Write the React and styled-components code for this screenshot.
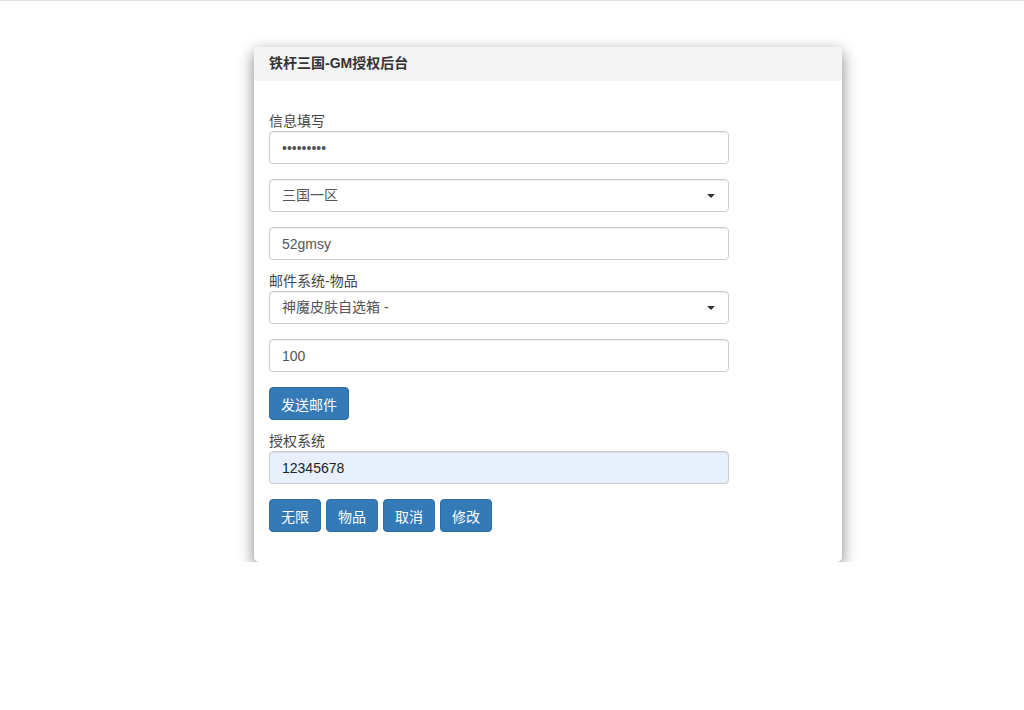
import React from 'react';
import styled, { createGlobalStyle } from 'styled-components';

const GlobalStyle = createGlobalStyle`
  html, body {
    margin: 0;
    padding: 0;
    background: #fff;
  }
  body {
    font-family: "Liberation Sans", Arial, "Noto Sans CJK SC", sans-serif;
    font-size: 14px;
    line-height: 1.42857;
    color: #333;
  }
  * {
    box-sizing: border-box;
  }
`;

const App = () => {
  return (
    <>
      <GlobalStyle />
      <TopLine />
      <Page>
        <Panel>
          <PanelHeading>铁杆三国-GM授权后台</PanelHeading>
          <PanelBody>
            <Label>信息填写</Label>
            <Group>
              <Input type="password" defaultValue="123456789" />
            </Group>
            <Group>
              <Select>
                <span>三国一区</span>
                <Caret />
              </Select>
            </Group>
            <Group>
              <Input type="text" defaultValue="52gmsy" />
            </Group>
            <Label>邮件系统-物品</Label>
            <Group>
              <Select>
                <span>神魔皮肤自选箱 -</span>
                <Caret />
              </Select>
            </Group>
            <Group>
              <Input type="text" defaultValue="100" />
            </Group>
            <Group>
              <Button>发送邮件</Button>
            </Group>
            <Label>授权系统</Label>
            <Group>
              <Input type="text" defaultValue="12345678" $filled />
            </Group>
            <ButtonRow>
              <Button>无限</Button>
              <Button>物品</Button>
              <Button>取消</Button>
              <Button>修改</Button>
            </ButtonRow>
          </PanelBody>
        </Panel>
      </Page>
    </>
  );
};

export default App;

const TopLine = styled.div`
  height: 1px;
  background: #e3e3e3;
`;

const Page = styled.div`
  padding: 46px 0 0 254px;
`;

const Panel = styled.div`
  width: 588px;
  background: #fff;
  border-radius: 5px;
  box-shadow: 0 5px 15px rgba(0, 0, 0, 0.5);
  overflow: hidden;
`;

const PanelHeading = styled.div`
  height: 34px;
  padding: 0 15px;
  display: flex;
  align-items: center;
  background: #f5f5f5;
  color: #333;
  font-weight: bold;
  font-size: 14px;
`;

const PanelBody = styled.div`
  padding: 30px 15px 15px;
`;

const Label = styled.div`
  height: 20px;
  line-height: 20px;
  margin-top: -4px;
  color: #444;
  font-size: 14px;
  &:first-child {
    margin-top: 0;
  }
`;

const Group = styled.div`
  margin-bottom: 15px;
`;

const Input = styled.input`
  display: block;
  width: 460px;
  height: 33px;
  padding: 6px 12px;
  font-family: inherit;
  font-size: 14px;
  color: ${(p) => (p.$filled ? '#222' : '#555')};
  background: ${(p) => (p.$filled ? '#e8f0fe' : '#fff')};
  border: 1px solid #ccc;
  border-radius: 4px;
  box-shadow: inset 0 1px 1px rgba(0, 0, 0, 0.075);
  outline: none;
`;

const Select = styled.div`
  width: 460px;
  height: 33px;
  padding: 0 12px;
  display: flex;
  align-items: center;
  justify-content: space-between;
  font-size: 14px;
  color: #555;
  background: #fff;
  border: 1px solid #ccc;
  border-radius: 4px;
  box-shadow: inset 0 1px 1px rgba(0, 0, 0, 0.075);
`;

const Caret = styled.i`
  width: 0;
  height: 0;
  margin-right: 1px;
  border-left: 4px solid transparent;
  border-right: 4px solid transparent;
  border-top: 4px solid #333;
`;

const ButtonRow = styled.div`
  display: flex;
  gap: 5px;
  margin-bottom: 15px;
`;

const Button = styled.button`
  height: 33px;
  padding: 0 11px;
  font-family: inherit;
  font-size: 14px;
  color: #fff;
  background: #337ab7;
  border: 1px solid #2e6da4;
  border-radius: 4px;
  cursor: pointer;
`;
